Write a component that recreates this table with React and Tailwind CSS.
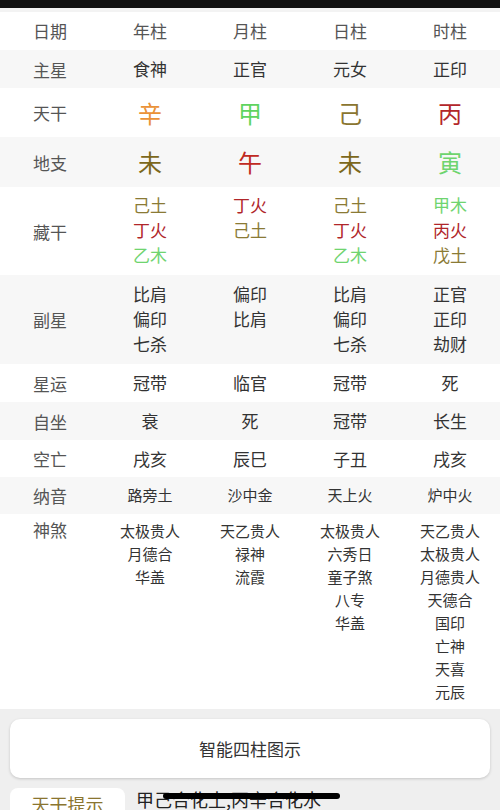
import React from "react";

const font = { fontFamily: '"Noto Sans CJK SC", "Noto Sans", sans-serif' };

const OLIVE = "text-[#8a7a35]";
const RED = "text-[#b0262a]";
const GREEN = "text-[#6fd46f]";

function Row({ label, bg, h, children, top = false, labelClass = "" }) {
  return (
    <div className={`grid grid-cols-5 ${bg} ${h}`}>
      <div className={`flex justify-center ${top ? "items-start pt-[4px]" : "items-center"} text-[17px] text-[#555] leading-[23px] ${labelClass}`}>
        {label}
      </div>
      {children}
    </div>
  );
}

function Cell({ children, className = "" }) {
  return <div className={`flex flex-col items-center justify-center ${className}`}>{children}</div>;
}

function Lines({ items, className = "" }) {
  return (
    <div className={`flex flex-col items-center pt-[5px] ${className}`}>
      {items.map((t, i) => (
        <div key={i}>{t}</div>
      ))}
    </div>
  );
}

export default function App() {
  const shensha = [
    ["太极贵人", "月德合", "华盖"],
    ["天乙贵人", "禄神", "流霞"],
    ["太极贵人", "六秀日", "童子煞", "八专", "华盖"],
    ["天乙贵人", "太极贵人", "月德贵人", "天德合", "国印", "亡神", "天喜", "元辰"],
  ];
  return (
    <div style={font} className="w-[500px] h-[810px] overflow-hidden bg-[#efefef] relative">
      <div className="h-[8px] bg-[#111]" />
      <div className="h-[4px] bg-[#f3f3f3]" />
      {/* header */}
      <div className="grid grid-cols-5 bg-white h-[38px] text-[17px] text-[#555]">
        {["日期", "年柱", "月柱", "日柱", "时柱"].map((t) => (
          <div key={t} className="flex items-center justify-center">{t}</div>
        ))}
      </div>
      <Row label="主星" bg="bg-[#f7f7f7]" h="h-[38px]">
        {["食神", "正官", "元女", "正印"].map((t) => (
          <Cell key={t} className="text-[17px] text-[#333]">{t}</Cell>
        ))}
      </Row>
      <Row label="天干" bg="bg-white" h="h-[49px]">
        <Cell className="text-[24px] text-[#ea9238]">辛</Cell>
        <Cell className="text-[24px] text-[#5fd45f]">甲</Cell>
        <Cell className="text-[24px] text-[#8a7530]">己</Cell>
        <Cell className="text-[24px] text-[#b3262a]">丙</Cell>
      </Row>
      <Row label="地支" bg="bg-[#f7f7f7]" h="h-[50px]">
        <Cell className="text-[24px] text-[#7c681c]">未</Cell>
        <Cell className="text-[24px] text-[#c02a22]">午</Cell>
        <Cell className="text-[24px] text-[#7c681c]">未</Cell>
        <Cell className="text-[24px] text-[#6ed46e]">寅</Cell>
      </Row>
      <Row label="藏干" bg="bg-white" h="h-[88px]">
        <div className="flex flex-col items-center pt-[5px] text-[17px] leading-[25px]">
          <div className={OLIVE}>己土</div>
          <div className={RED}>丁火</div>
          <div className={GREEN}>乙木</div>
        </div>
        <div className="flex flex-col items-center pt-[5px] text-[17px] leading-[25px]">
          <div className={RED}>丁火</div>
          <div className={OLIVE}>己土</div>
        </div>
        <div className="flex flex-col items-center pt-[5px] text-[17px] leading-[25px]">
          <div className={OLIVE}>己土</div>
          <div className={RED}>丁火</div>
          <div className={GREEN}>乙木</div>
        </div>
        <div className="flex flex-col items-center pt-[5px] text-[17px] leading-[25px]">
          <div className={GREEN}>甲木</div>
          <div className={RED}>丙火</div>
          <div className={OLIVE}>戊土</div>
        </div>
      </Row>
      <Row label="副星" bg="bg-[#f7f7f7]" h="h-[89px]">
        {[
          ["比肩", "偏印", "七杀"],
          ["偏印", "比肩"],
          ["比肩", "偏印", "七杀"],
          ["正官", "正印", "劫财"],
        ].map((items, i) => (
          <Lines key={i} items={items} className="text-[17px] leading-[25px] text-[#333] pt-[6px]" />
        ))}
      </Row>
      <Row label="星运" bg="bg-white" h="h-[38px]">
        {["冠带", "临官", "冠带", "死"].map((t, i) => (
          <Cell key={i} className="text-[17px] text-[#333]">{t}</Cell>
        ))}
      </Row>
      <Row label="自坐" bg="bg-[#f7f7f7]" h="h-[38px]">
        {["衰", "死", "冠带", "长生"].map((t, i) => (
          <Cell key={i} className="text-[17px] text-[#333]">{t}</Cell>
        ))}
      </Row>
      <Row label="空亡" bg="bg-white" h="h-[37px]">
        {["戌亥", "辰巳", "子丑", "戌亥"].map((t, i) => (
          <Cell key={i} className="text-[17px] text-[#333]">{t}</Cell>
        ))}
      </Row>
      <Row label="纳音" bg="bg-[#f7f7f7]" h="h-[37px]">
        {["路旁土", "沙中金", "天上火", "炉中火"].map((t, i) => (
          <Cell key={i} className="text-[15px] text-[#333]">{t}</Cell>
        ))}
      </Row>
      <Row label="神煞" bg="bg-white" h="h-[195px]" top>
        {shensha.map((items, i) => (
          <Lines key={i} items={items} className="text-[15px] leading-[23px] text-[#333] pt-[4px]" />
        ))}
      </Row>
      {/* bottom area */}
      <div className="px-[10px] pt-[10px]">
        <div className="h-[59px] bg-white rounded-[10px] shadow-[0_1px_3px_rgba(0,0,0,0.18)] flex items-center justify-center text-[17px] text-[#333]">
          智能四柱图示
        </div>
        <div className="flex items-start gap-[11px] mt-[10px]">
          <div className="w-[115px] h-[40px] bg-white rounded-t-[8px] flex justify-center pt-[3px] text-[18px] text-[#8a7530]">
            天干提示
          </div>
          <div className="relative text-[18px] text-[#222] leading-[22px] pt-[0px]">
            甲己合化土,丙辛合化水
            <div className="absolute left-[27px] top-[5px] w-[177px] h-[6px] rounded-full bg-black" />
          </div>
        </div>
      </div>
    </div>
  );
}
